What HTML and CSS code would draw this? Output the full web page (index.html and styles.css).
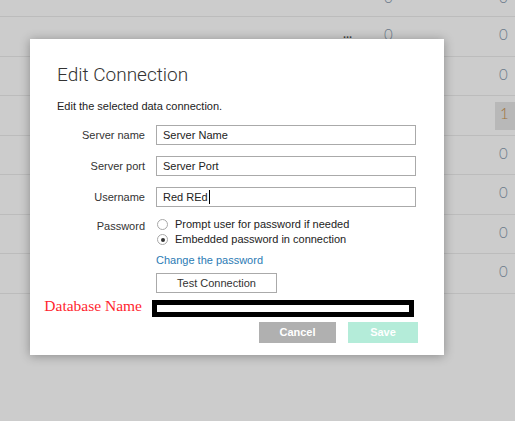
FILE: index.html
```html
<!DOCTYPE html>
<html>
<head>
<meta charset="utf-8">
<link rel="stylesheet" href="styles.css">
</head>
<body>
<div class="table">
  <div class="row r0"><div class="c c1"></div><div class="c c2"></div><div class="c c3"><span class="num">0</span></div><div class="c c4"><span class="num">0</span></div></div>
  <div class="row r1"><div class="c c1"></div><div class="c c2"><span class="dots">...</span></div><div class="c c3"><span class="num">0</span></div><div class="c c4"><span class="num">0</span></div></div>
  <div class="row r2"><div class="c c1"></div><div class="c c2"></div><div class="c c3"></div><div class="c c4"><span class="num">0</span></div></div>
  <div class="row r3"><div class="c c1"></div><div class="c c2"></div><div class="c c3"></div><div class="c c4"><span class="num hl">1</span></div></div>
  <div class="row r4"><div class="c c1"></div><div class="c c2"></div><div class="c c3"></div><div class="c c4"><span class="num">0</span></div></div>
  <div class="row r5"><div class="c c1"></div><div class="c c2"></div><div class="c c3"></div><div class="c c4"><span class="num">0</span></div></div>
  <div class="row r6"><div class="c c1"></div><div class="c c2"></div><div class="c c3"></div><div class="c c4"><span class="num">0</span></div></div>
  <div class="row r7"><div class="c c1"></div><div class="c c2"></div><div class="c c3"></div><div class="c c4"><span class="num">0</span></div></div>
</div>

<div class="modal">
  <h1 class="title">Edit Connection</h1>
  <p class="subtitle">Edit the selected data connection.</p>

  <div class="frow first">
    <div class="label">Server name</div>
    <div class="input">Server Name</div>
  </div>
  <div class="frow">
    <div class="label">Server port</div>
    <div class="input">Server Port</div>
  </div>
  <div class="frow">
    <div class="label">Username</div>
    <div class="input">Red REd<span class="caret"></span></div>
  </div>
  <div class="frow pw">
    <div class="label pwlabel">Password</div>
    <div class="radios">
      <div class="radio"><span class="circle"></span>Prompt user for password if needed</div>
      <div class="radio"><span class="circle on"></span>Embedded password in connection</div>
    </div>
  </div>
  <div class="frow linkrow">
    <div class="label"></div>
    <a class="link">Change the password</a>
  </div>
  <div class="frow testrow">
    <div class="label"></div>
    <div class="testbtn">Test Connection</div>
  </div>
  <div class="dbrow">
    <div class="dblabelcell"><span class="dblabel">Database Name</span></div>
    <div class="dbbox"></div>
  </div>
  <div class="actions">
    <div class="btn cancel">Cancel</div>
    <div class="btn save">Save</div>
  </div>
</div>
</body>
</html>
```

FILE: styles.css
```css
html, body {
  margin: 0;
  padding: 0;
}
body {
  width: 515px;
  height: 421px;
  overflow: hidden;
  background: #cccccc;
  position: relative;
  font-family: "Liberation Sans", Arial, sans-serif;
}

/* background table */
.table {
  width: 515px;
}
.row {
  display: grid;
  grid-template-columns: 343px 41px 111px 20px;
  box-sizing: border-box;
  border-bottom: 1px solid #bcbcbc;
  overflow: hidden;
}
.r0 { height: 17px; }
.r1, .r3, .r5, .r7 { height: 40px; }
.r2, .r4, .r6 { height: 39px; }
.c {
  padding-top: 6px;
}
.r0 .c { margin-top: -20px; }
.num {
  display: block;
  height: 28px;
  box-sizing: border-box;
  padding-top: 2px;
  font-family: Lato, "Open Sans", sans-serif;
  font-weight: 300;
  font-size: 15px;
  line-height: 18px;
  color: #6b7a8a;
}
.c4 .num {
  padding-left: 4px;
  width: 20px;
}
.num.hl {
  background: #b8b8b8;
  color: #a0733c;
  padding-left: 5px;
}
.dots {
  display: block;
  font-size: 11px;
  font-weight: bold;
  line-height: 18px;
  padding-top: 2px;
  color: #444;
}

/* modal */
.modal {
  position: absolute;
  left: 30px;
  top: 39px;
  width: 414px;
  height: 316px;
  box-sizing: border-box;
  background: #fff;
  box-shadow: 0 1px 10px rgba(0, 0, 0, 0.32);
  padding: 24px 27px 0 27px;
  font-size: 11px;
  color: #333;
}
.title {
  margin: 0;
  font-family: Roboto, "Liberation Sans", sans-serif;
  font-weight: 300;
  font-size: 19px;
  line-height: 24px;
  color: #333;
}
.subtitle {
  margin: 13px 0 0 0;
  line-height: 13px;
  font-size: 11px;
  color: #222;
}
.frow {
  display: flex;
  align-items: center;
  margin-top: 11px;
}
.frow.first { margin-top: 12px; }
.label {
  width: 88px;
  margin-right: 11px;
  text-align: right;
  flex: none;
  color: #333;
}
.input {
  width: 260px;
  height: 20px;
  box-sizing: border-box;
  border: 1px solid #aaaaaa;
  padding-left: 6px;
  line-height: 18px;
  color: #222;
  display: flex;
  align-items: center;
}
.caret {
  display: inline-block;
  width: 1px;
  height: 14px;
  background: #000;
  margin-left: 1px;
}
.frow.pw {
  align-items: flex-start;
  margin-top: 10px;
}
.pwlabel {
  padding-top: 2px;
  line-height: 15px;
}
.radios {
  display: flex;
  flex-direction: column;
}
.radio {
  display: flex;
  align-items: center;
  height: 15px;
  line-height: 15px;
  color: #222;
}
.circle {
  width: 11px;
  height: 11px;
  box-sizing: border-box;
  border: 1px solid #a8a8a8;
  border-radius: 50%;
  margin: 0 7px 0 1px;
  background: #fff;
  display: flex;
  align-items: center;
  justify-content: center;
}
.circle.on::after {
  content: "";
  width: 4px;
  height: 4px;
  border-radius: 50%;
  background: #333;
}
.frow.linkrow { margin-top: 6px; }
.link {
  line-height: 14px;
  color: #2c7bb4;
  text-decoration: none;
}
.frow.testrow { margin-top: 6px; }
.testbtn {
  width: 121px;
  height: 20px;
  box-sizing: border-box;
  border: 1px solid #aaaaaa;
  line-height: 18px;
  text-align: center;
  color: #333;
}
.dbrow {
  display: flex;
  align-items: flex-start;
  margin-top: 7px;
}
.dblabelcell {
  width: 88px;
  margin-right: 7px;
  flex: none;
  display: flex;
  justify-content: flex-end;
}
.dblabel {
  white-space: nowrap;
  font-family: "Liberation Serif", "Times New Roman", serif;
  font-size: 15.5px;
  line-height: 17px;
  color: #ff1f2f;
  margin-right: 3px;
  margin-top: -3px;
}
.dbbox {
  width: 262px;
  height: 17px;
  box-sizing: border-box;
  border: 5px solid #000;
  background: #fff;
}
.actions {
  display: flex;
  justify-content: flex-end;
  gap: 12px;
  margin-top: 5px;
  margin-right: -1px;
}
.btn {
  height: 21px;
  line-height: 21px;
  text-align: center;
  color: #fff;
  font-weight: bold;
  font-size: 11px;
}
.cancel {
  width: 77px;
  background: #b0b0b0;
}
.save {
  width: 70px;
  background: #b4ecd9;
}
```
